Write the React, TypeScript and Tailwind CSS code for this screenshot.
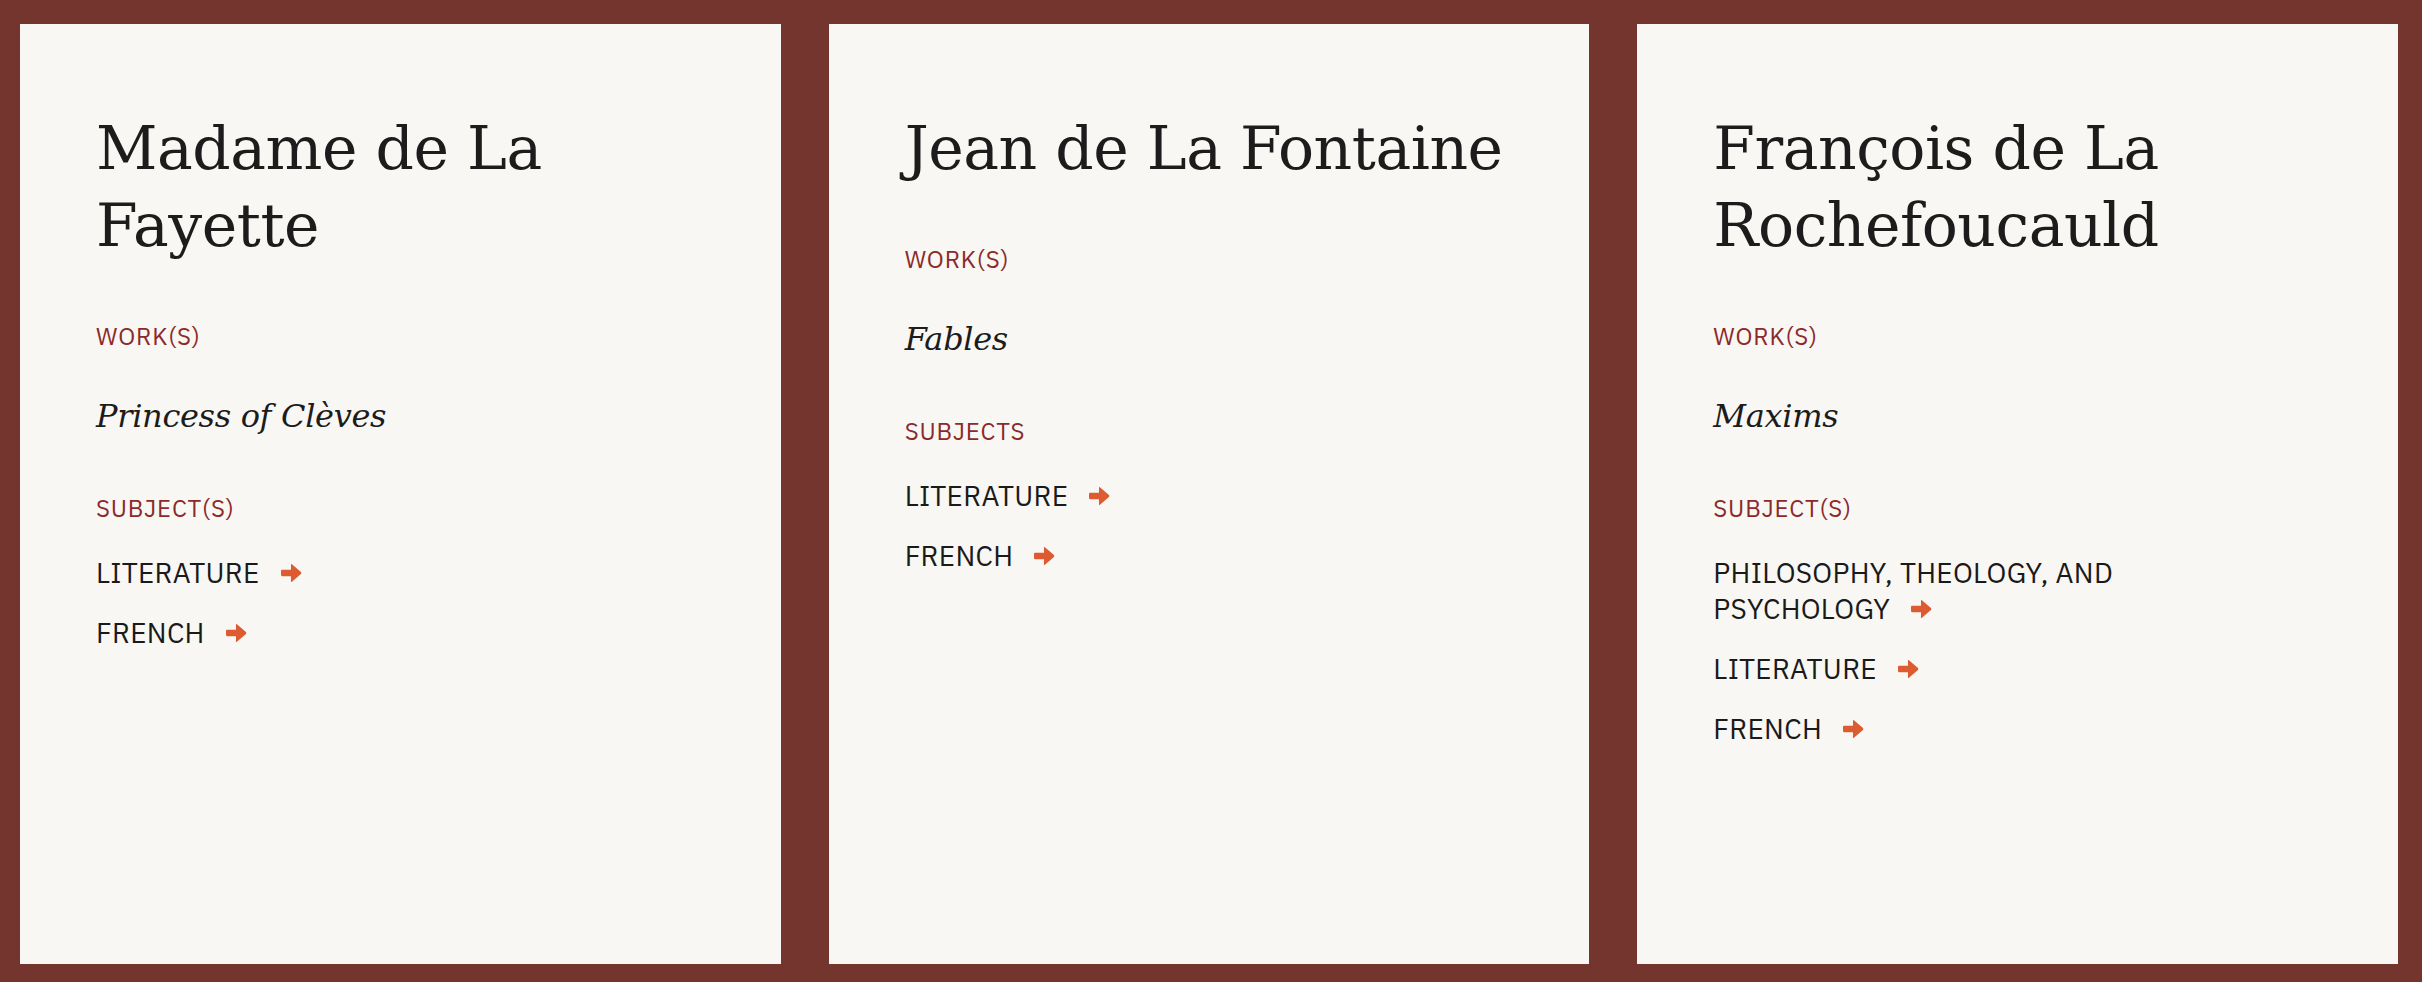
type Author = {
  name: string;
  workLabel: string;
  works: string[];
  subjectLabel: string;
  subjects: string[];
};

const authors: Author[] = [
  {
    name: 'Madame de La Fayette',
    workLabel: 'Work(s)',
    works: ['Princess of Clèves'],
    subjectLabel: 'Subject(s)',
    subjects: ['Literature', 'French'],
  },
  {
    name: 'Jean de La Fontaine',
    workLabel: 'Work(s)',
    works: ['Fables'],
    subjectLabel: 'Subjects',
    subjects: ['Literature', 'French'],
  },
  {
    name: 'François de La Rochefoucauld',
    workLabel: 'Work(s)',
    works: ['Maxims'],
    subjectLabel: 'Subject(s)',
    subjects: ['Philosophy, Theology, and Psychology', 'Literature', 'French'],
  },
];

// flèche orange après chaque sujet
function Arrow() {
  return (
    <svg
      viewBox="0 0 20 19"
      className="inline-block w-[21px] h-[20px] ml-[21px] align-baseline"
      aria-hidden="true"
    >
      <path
        d="M1 6.5 H9.5 V1.5 Q9.5 0.5 10.4 1.2 L19 8.6 Q19.8 9.5 19 10.4 L10.4 17.8 Q9.5 18.5 9.5 17.5 V12.5 H1 Q0 12.5 0 11.5 V7.5 Q0 6.5 1 6.5 Z"
        fill="#dc5b30"
      />
    </svg>
  );
}

function AuthorCard({ author }: { author: Author }) {
  return (
    <div className="bg-[#f8f7f3] pt-[86px] px-[76px]">
      <h2 className="font-['DejaVu_Serif',serif] text-[60px] leading-[77px] tracking-[-0.008em] text-[#1c1c1c] font-normal">
        {author.name}
      </h2>

      <div className="mt-[54px] font-['IBM_Plex_Sans',Roboto,sans-serif] text-[24px] leading-[36px] tracking-[0.8px] uppercase text-[#8c2a2b]">
        {author.workLabel}
      </div>
      <ul className="mt-[40px]">
        {author.works.map((w) => (
          <li key={w} className="font-['DejaVu_Serif',serif] italic text-[32px] leading-[44px] tracking-[-0.01em] text-[#1c1c1c]">
            {w}
          </li>
        ))}
      </ul>

      <div className="mt-[52px] font-['IBM_Plex_Sans',Roboto,sans-serif] text-[24px] leading-[36px] tracking-[0.8px] uppercase text-[#8c2a2b]">
        {author.subjectLabel}
      </div>
      <ul className="mt-[29px] flex flex-col gap-[24px]">
        {author.subjects.map((s) => (
          <li key={s} className="max-w-[560px]">
            <a
              href="#"
              className="font-['IBM_Plex_Sans',Roboto,sans-serif] text-[28px] leading-[36px] tracking-[0.3px] uppercase text-[#1a1a1a]"
            >
              {s}<Arrow />
            </a>
          </li>
        ))}
      </ul>
    </div>
  );
}

export default function App() {
  return (
    <main className="min-h-screen bg-[#75352f] pt-[24px] pb-[18px] pl-[20px] pr-[24px]">
      <div className="grid grid-cols-3 gap-[48px] h-[940px]">
        {authors.map((a) => (
          <AuthorCard key={a.name} author={a} />
        ))}
      </div>
    </main>
  );
}
